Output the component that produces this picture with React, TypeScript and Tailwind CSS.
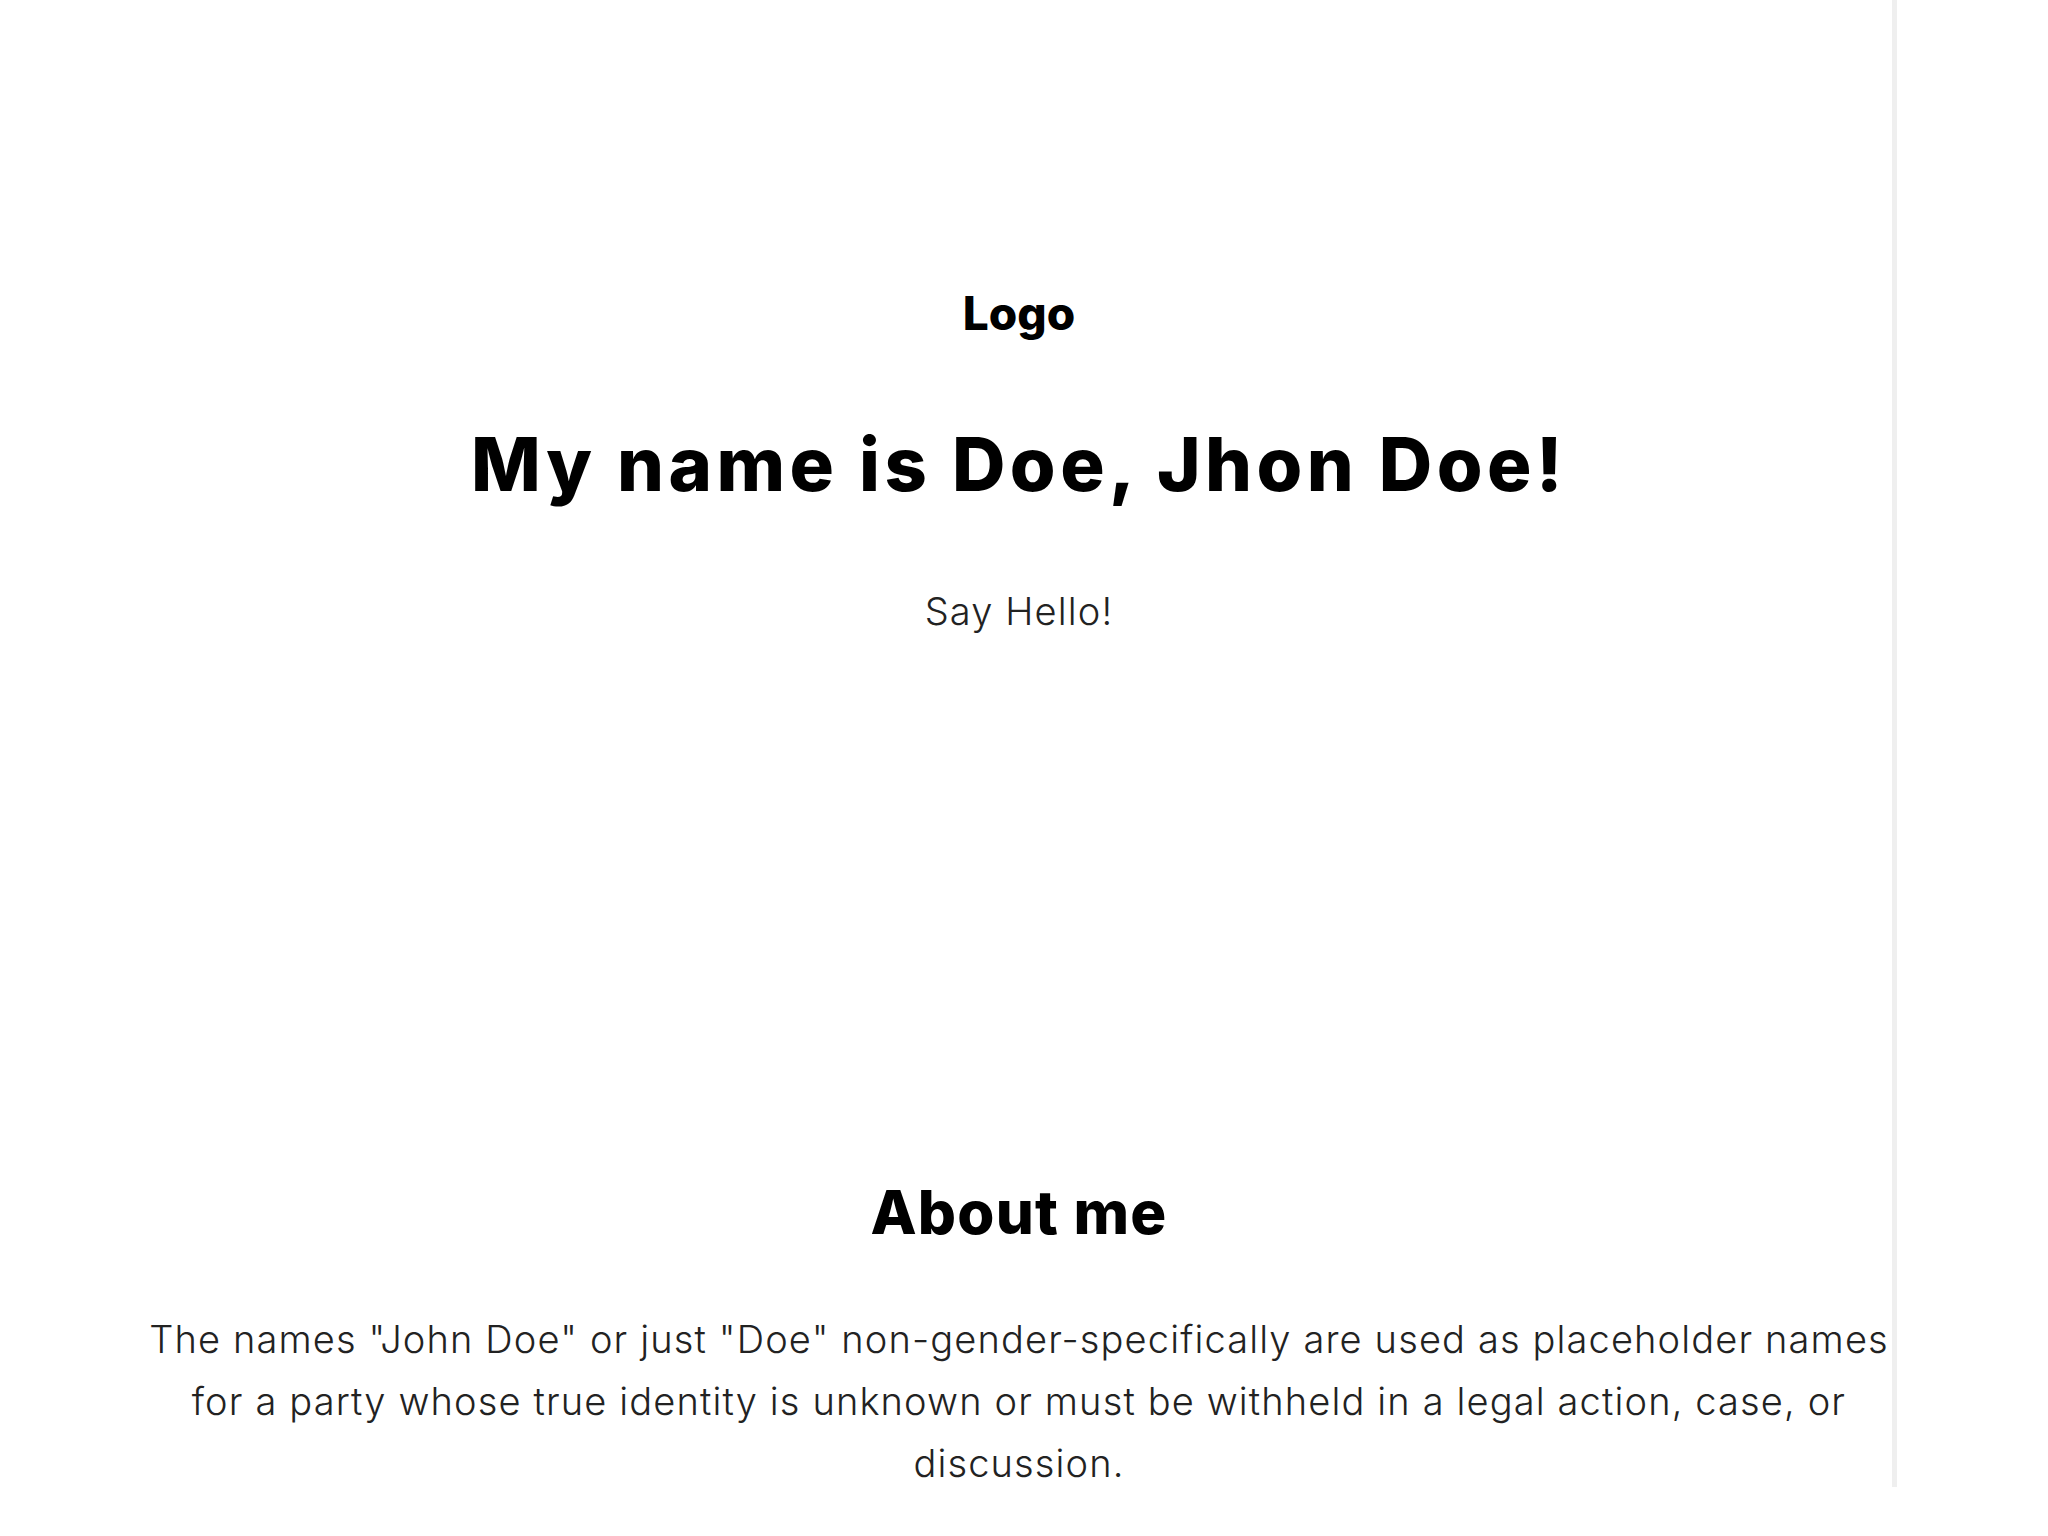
export default function App() {
  return (
    <div className="w-full h-[1536px] bg-white font-['Inter',sans-serif] overflow-hidden">
      <main className="ml-[146px] w-[1751px] h-[1487px] border-r-[5px] border-[#efefef] overflow-hidden flex flex-col items-center">
        {/* Header */}
        <div className="pt-[290px] text-[46px] leading-[46px] font-extrabold text-black">Logo</div>

        {/* Hero */}
        <h1 className="mt-[88px] text-[74px] leading-[80px] font-extrabold text-black tracking-[0.06em]">
          My name is Doe, Jhon Doe!
        </h1>
        <p className="mt-[85px] text-[38px] leading-[44px] font-light text-[#222] tracking-[0.03em]">Say Hello!</p>

        {/* About */}
        <h2 className="mt-[547px] text-[60px] leading-[64px] font-extrabold text-black tracking-[0.02em]">About me</h2>
        <p className="mt-[64px] w-[1760px] shrink-0 text-center text-[38px] leading-[62px] font-light text-[#222] tracking-[0.03em]">
          The names "John Doe" or just "Doe" non-gender-specifically are used as placeholder names for a party whose true identity is unknown or must be withheld in a legal action, case, or discussion.
        </p>
      </main>
    </div>
  );
}
